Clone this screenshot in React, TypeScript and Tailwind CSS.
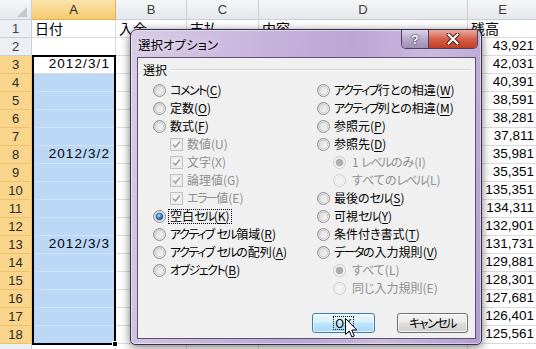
import React from 'react';

const eValues: Record<number, string> = {
  2: '43,921', 3: '42,031', 4: '40,391', 5: '38,591', 6: '38,281', 7: '37,811',
  8: '35,981', 9: '35,351', 10: '135,351', 11: '134,311', 12: '132,901',
  13: '131,731', 14: '129,881', 15: '128,301', 16: '127,681', 17: '126,401', 18: '125,561',
};
const dates: Record<number, string> = { 3: '2012/3/1', 8: '2012/3/2', 13: '2012/3/3' };
const rows = Array.from({ length: 19 }, (_, i) => i + 1);

const jp = "font-['Noto_Sans_CJK_JP',sans-serif]";

// MS UI Gothic has narrow katakana, so tighten katakana runs a little
function Kana({ text }: { text: string }) {
  const parts = text.split(/([\u30A0-\u30FF]+)/);
  return (
    <>
      {parts.map((p, i) =>
        /^[\u30A0-\u30FF]+$/.test(p) ? (
          <span key={i} className="tracking-[-1.5px]">
            {p}
          </span>
        ) : (
          <React.Fragment key={i}>{p}</React.Fragment>
        )
      )}
    </>
  );
}

function ColHeader({ label, selected = false }: { label: string; selected?: boolean }) {
  return (
    <div
      className={
        selected
          ? 'h-[20px] border-b border-r border-[#e2b45a] bg-gradient-to-b from-[#fbe4ab] to-[#f5c96b] flex items-center justify-center text-[13px] text-[#2a2a2a]'
          : 'h-[20px] border-b border-r border-[#c9ced5] bg-gradient-to-b from-[#f5f6f8] to-[#e5e8ec] flex items-center justify-center text-[13px] text-[#3c3c3c]'
      }
    >
      {label}
    </div>
  );
}

function Cell({ children, right = false }: { children?: React.ReactNode; right?: boolean }) {
  return (
    <div
      className={
        right
          ? 'h-[18px] border-b border-r border-[#dadcdd] flex items-center justify-end pr-[3px] text-[13.5px] text-black whitespace-nowrap'
          : `h-[18px] border-b border-r border-[#dadcdd] flex items-center pl-[3px] text-[14px] text-black whitespace-nowrap ${jp}`
      }
    >
      {children}
    </div>
  );
}

function RowHeaders() {
  return (
    <div className="w-[32px] shrink-0 flex flex-col">
      <div className="h-[20px] border-b border-r border-[#c9ced5] bg-gradient-to-b from-[#f5f6f8] to-[#e5e8ec] flex items-end justify-end pr-[4px] pb-[2px]">
        <svg width="10" height="10" viewBox="0 0 10 10">
          <polygon points="10,0 10,10 0,10" fill="#c3c8ce" />
        </svg>
      </div>
      {rows.map((r) => (
        <div
          key={r}
          className={
            r >= 3 && r <= 18
              ? 'h-[18px] border-b border-r border-[#e9c36f] bg-[#f9d58b] flex items-center justify-center text-[13px] text-[#2a2a2a]'
              : 'h-[18px] border-b border-r border-[#c9ced5] bg-[#eceff3] flex items-center justify-center text-[13px] text-[#3c3c3c]'
          }
        >
          {r < 19 ? r : ''}
        </div>
      ))}
    </div>
  );
}

function ColumnA() {
  const sel = rows.filter((r) => r >= 3 && r <= 18);
  return (
    <div className="w-[84px] shrink-0 flex flex-col">
      <ColHeader label="A" selected />
      <Cell>日付</Cell>
      <Cell />
      <div className="relative flex flex-col">
        {sel.map((r) => (
          <div
            key={r}
            className={
              r === 3
                ? 'h-[18px] border-b border-r border-[#dadcdd] bg-white flex items-center justify-end pr-[5px] text-[13.5px] tracking-[1.1px] text-black'
                : 'h-[18px] border-b border-r border-[#d2e3f7] bg-[#bcd8f7] flex items-center justify-end pr-[5px] text-[13.5px] tracking-[1.1px] text-black'
            }
          >
            {dates[r] ?? ''}
          </div>
        ))}
        <div className="absolute left-0 right-0 top-[-1px] bottom-[-1px] border-2 border-black pointer-events-none" />
        <div className="absolute right-[-2px] bottom-[-3px] w-[6px] h-[6px] bg-black border border-white" />
      </div>
      <Cell />
    </div>
  );
}

function PlainCol({ w, label, first }: { w: string; label: string; first: string }) {
  return (
    <div className={`${w} shrink-0 flex flex-col`}>
      <ColHeader label={label} />
      {rows.map((r) => (
        <Cell key={r}>{r === 1 ? first : ''}</Cell>
      ))}
    </div>
  );
}

function ColumnE() {
  return (
    <div className="w-[70px] shrink-0 flex flex-col">
      <ColHeader label="E" />
      <Cell>残高</Cell>
      {rows.slice(1).map((r) => (
        <Cell key={r} right>
          {eValues[r] ?? ''}
        </Cell>
      ))}
    </div>
  );
}

function Radio({ checked = false, disabled = false }: { checked?: boolean; disabled?: boolean }) {
  return (
    <svg width="13" height="13" viewBox="0 0 13 13" className="shrink-0">
      <defs>
        <linearGradient id="rOuter" x1="0" y1="0" x2="1" y2="1">
          <stop offset="0" stopColor="#cfcfcf" />
          <stop offset="1" stopColor="#fbfbfb" />
        </linearGradient>
        <linearGradient id="rInner" x1="0" y1="0" x2="1" y2="1">
          <stop offset="0" stopColor="#dcdcdc" />
          <stop offset="1" stopColor="#f6f6f6" />
        </linearGradient>
        <radialGradient id="rDot" cx="0.4" cy="0.35" r="0.75">
          <stop offset="0" stopColor="#b4e2ff" />
          <stop offset="0.45" stopColor="#3a8ad8" />
          <stop offset="1" stopColor="#123f78" />
        </radialGradient>
      </defs>
      <circle
        cx="6.5"
        cy="6.5"
        r="6"
        fill={disabled ? '#f5f5f5' : 'url(#rOuter)'}
        stroke={disabled ? '#cacaca' : '#8e8f8f'}
        strokeWidth="1"
      />
      <circle
        cx="6.5"
        cy="6.5"
        r="4.2"
        fill={disabled ? '#f2f2f2' : 'url(#rInner)'}
        stroke={disabled ? '#e2e2e2' : '#c3c3c3'}
        strokeWidth="0.7"
      />
      {checked && (
        <circle
          cx="6.5"
          cy="6.5"
          r="3.3"
          fill={disabled ? '#adadad' : 'url(#rDot)'}
          stroke={disabled ? '#9c9c9c' : '#1a4a82'}
          strokeWidth="0.6"
        />
      )}
    </svg>
  );
}

function CheckDisabled() {
  return (
    <svg width="13" height="13" viewBox="0 0 13 13" className="shrink-0">
      <rect x="0.5" y="0.5" width="12" height="12" fill="#f4f4f4" stroke="#c2c2c2" />
      <rect x="2" y="2" width="9" height="9" fill="#f7f7f7" stroke="#e0e0e0" />
      <path d="M3.2 6.6 L5.5 9 L9.8 3.4" fill="none" stroke="#a3a3a3" strokeWidth="1.6" />
    </svg>
  );
}

type Opt = {
  text: string;
  k: string;
  kind: 'radio' | 'check' | 'sub';
  checked?: boolean;
  disabled?: boolean;
  focus?: boolean;
};

const leftOpts: Opt[] = [
  { text: 'コメント', k: 'C', kind: 'radio' },
  { text: '定数', k: 'O', kind: 'radio' },
  { text: '数式', k: 'F', kind: 'radio' },
  { text: '数値', k: 'U', kind: 'check', disabled: true },
  { text: '文字', k: 'X', kind: 'check', disabled: true },
  { text: '論理値', k: 'G', kind: 'check', disabled: true },
  { text: 'エラー値', k: 'E', kind: 'check', disabled: true },
  { text: '空白セル', k: 'K', kind: 'radio', checked: true, focus: true },
  { text: 'アクティブ セル領域', k: 'R', kind: 'radio' },
  { text: 'アクティブ セルの配列', k: 'A', kind: 'radio' },
  { text: 'オブジェクト', k: 'B', kind: 'radio' },
];

const rightOpts: Opt[] = [
  { text: 'アクティブ行との相違', k: 'W', kind: 'radio' },
  { text: 'アクティブ列との相違', k: 'M', kind: 'radio' },
  { text: '参照元', k: 'P', kind: 'radio' },
  { text: '参照先', k: 'D', kind: 'radio' },
  { text: '1 レベルのみ', k: 'I', kind: 'sub', checked: true, disabled: true },
  { text: 'すべてのレベル', k: 'L', kind: 'sub', disabled: true },
  { text: '最後のセル', k: 'S', kind: 'radio' },
  { text: '可視セル', k: 'Y', kind: 'radio' },
  { text: '条件付き書式', k: 'T', kind: 'radio' },
  { text: 'データの入力規則', k: 'V', kind: 'radio' },
  { text: 'すべて', k: 'L', kind: 'sub', checked: true, disabled: true },
  { text: '同じ入力規則', k: 'E', kind: 'sub', disabled: true },
];

function Option({ o }: { o: Opt }) {
  const label = (
    <span className={o.disabled ? 'text-[#8f8f8f] whitespace-nowrap' : 'text-black whitespace-nowrap'}>
      <Kana text={o.text} />(
      {o.disabled ? o.k : <span className="underline underline-offset-[2px]">{o.k}</span>})
    </span>
  );
  return (
    <div
      className={
        o.kind === 'radio'
          ? 'h-[18px] flex items-center'
          : o.kind === 'check'
          ? 'h-[18px] flex items-center pl-[17px]'
          : 'h-[18px] flex items-center pl-[16px]'
      }
    >
      {o.kind === 'check' ? <CheckDisabled /> : <Radio checked={o.checked} disabled={o.disabled} />}
      {o.focus ? (
        <span className="ml-[2px] px-[1px] h-[15px] flex items-center border border-dotted border-black">{label}</span>
      ) : (
        <span className={o.kind === 'sub' ? 'ml-[6px]' : 'ml-[4px]'}>{label}</span>
      )}
    </div>
  );
}

function Dialog() {
  return (
    <div
      className={`absolute left-[130px] top-[29px] w-[352px] h-[316px] flex flex-col rounded-t-[7px] rounded-b-[5px] border border-[#3a2f4b] bg-[linear-gradient(100deg,#d8cce6_0%,#c8b6dd_30%,#bba5d4_55%,#cbbadf_75%,#b39ccf_100%)] shadow-[inset_0_0_0_1px_rgba(255,255,255,0.45),0_2px_10px_rgba(0,0,0,0.55)] ${jp}`}
    >
      <div className="h-[27px] flex items-start shrink-0">
        <span className="ml-[7px] mt-[6px] text-[12.5px] leading-[18px] text-black [font-feature-settings:'palt'] [text-shadow:0_0_6px_rgba(255,255,255,0.9)]">
          選択オプション
        </span>
        <div className="ml-auto mr-[3px] flex h-[19px] rounded-b-[5px] border border-t-0 border-[#4b405e] overflow-hidden">
          <div className="w-[27px] h-full border-r border-[#4b405e] bg-gradient-to-b from-[#ddd4e8] via-[#b9aacb] to-[#9d8db4] flex items-center justify-center">
            <span className="font-['Liberation_Sans',sans-serif] font-bold text-[13px] leading-none text-white [text-shadow:0_0_1px_#2c2440,0_0_2px_#2c2440]">
              ?
            </span>
          </div>
          <div className="w-[48px] h-full bg-gradient-to-b from-[#eaaa9e] via-[#d4604a] to-[#c13b24] flex items-center justify-center">
            <svg width="14" height="12" viewBox="0 0 14 12">
              <path d="M2.5 1.5 L11.5 10.5 M11.5 1.5 L2.5 10.5" stroke="#4a1c16" strokeWidth="4" strokeLinecap="round" />
              <path d="M2.5 1.5 L11.5 10.5 M11.5 1.5 L2.5 10.5" stroke="#ffffff" strokeWidth="2.2" strokeLinecap="round" />
            </svg>
          </div>
        </div>
      </div>
      <div className="ml-[6px] mr-[5px] mb-[5px] flex-1 border border-[#5d4f76] bg-[#f0f0f0] flex flex-col text-[12px] [font-feature-settings:'palt']">
        <div className="mt-[4px] h-[16px] flex items-center pl-[5px] pr-[4px]">
          <span>選択</span>
          <div className="ml-[4px] flex-1 border-t border-b border-t-[#d5d5d5] border-b-white h-[2px]" />
        </div>
        <div className="mt-[3px] pl-[15px] flex">
          <div className="w-[164px] flex flex-col">
            {leftOpts.map((o) => (
              <Option key={o.text} o={o} />
            ))}
          </div>
          <div className="flex flex-col">
            {rightOpts.map((o) => (
              <Option key={o.text} o={o} />
            ))}
          </div>
        </div>
        <div className="mt-[16px] pr-[7px] flex justify-end gap-[22px]">
          <div className="w-[63px] h-[20px] rounded-[3px] border border-[#3c7fb1] bg-[linear-gradient(to_bottom,#eaf6fd_0%,#d9f0fc_45%,#bee6fd_50%,#a7d9f5_100%)] shadow-[inset_0_0_0_1px_rgba(255,255,255,0.7)] flex items-center justify-center">
            <span className="px-[1px] h-[14px] flex items-center border border-dotted border-black leading-none">OK</span>
          </div>
          <div className="w-[71px] h-[20px] rounded-[3px] border border-[#707070] bg-[linear-gradient(to_bottom,#f2f2f2_0%,#ebebeb_45%,#dddddd_50%,#cfcfcf_100%)] shadow-[inset_0_0_0_1px_rgba(255,255,255,0.7)] flex items-center justify-center">
            <Kana text="キャンセル" />
          </div>
        </div>
      </div>
    </div>
  );
}

export default function App() {
  return (
    <div className="relative w-[536px] h-[349px] overflow-hidden bg-white font-['Liberation_Sans',sans-serif]">
      <div className="flex">
        <RowHeaders />
        <ColumnA />
        <PlainCol w="w-[71px]" label="B" first="入金" />
        <PlainCol w="w-[72px]" label="C" first="支払" />
        <PlainCol w="w-[209px]" label="D" first="内容" />
        <ColumnE />
      </div>
      <Dialog />
      <svg className="absolute left-[345px] top-[318px]" width="13" height="21" viewBox="0 0 13 21">
        <path
          d="M0.5 0.5 L0.5 16.5 L4.3 12.9 L6.9 19 L9.3 18 L6.8 12 L11.8 12 Z"
          fill="#ffffff"
          stroke="#000000"
          strokeWidth="1"
          strokeLinejoin="round"
        />
      </svg>
    </div>
  );
}
